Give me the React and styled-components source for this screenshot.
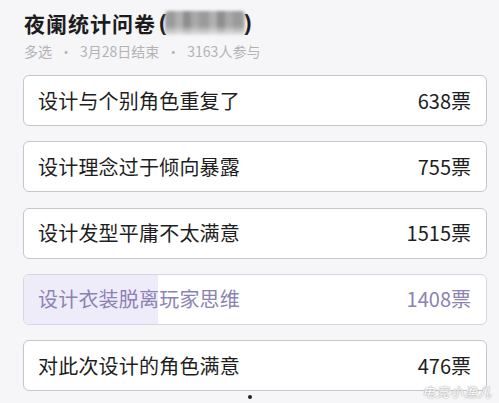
import React from 'react'
import styled, { createGlobalStyle } from 'styled-components'

const Global = createGlobalStyle`
  html, body { margin: 0; padding: 0; background: #f6f6f8; }
  body { font-family: "Noto Sans CJK SC", "Noto Sans", sans-serif; }
`

const options = [
  { id: 1, text: '设计与个别角色重复了', votes: 638 },
  { id: 2, text: '设计理念过于倾向暴露', votes: 755 },
  { id: 3, text: '设计发型平庸不太满意', votes: 1515 },
  { id: 4, text: '设计衣装脱离玩家思维', votes: 1408, mine: true, fill: 29 },
  { id: 5, text: '对此次设计的角色满意', votes: 476 },
]

const App = () => {
  return (
    <Page>
      <Global />
      <Header>
        <Title>
          夜阑统计问卷<Paren>(</Paren><Blur /><Paren>)</Paren>
        </Title>
        <Meta>
          <span>多选</span>
          <Sep>·</Sep>
          <span>3月28日结束</span>
          <Sep>·</Sep>
          <span>3163人参与</span>
        </Meta>
      </Header>
      <List>
        {options.map(o => (
          <Option key={o.id} $mine={o.mine}>
            {o.fill && <Fill style={{ width: `${o.fill}%` }} />}
            <Label>{o.text}</Label>
            <Votes>{o.votes}票</Votes>
          </Option>
        ))}
      </List>
      <Dot />
      <Watermark>电竞小渔儿</Watermark>
    </Page>
  )
}

const Page = styled.div`
  position: relative;
  width: 499px;
  height: 403px;
  overflow: hidden;
  background: #f6f6f8;
  box-sizing: border-box;
  padding: 8px 12px 0 23px;
`

const Header = styled.div`
  display: flex;
  flex-direction: column;
  padding-left: 1px;
`

const Title = styled.div`
  display: flex;
  align-items: center;
  height: 30px;
  font-size: 21px;
  font-weight: 700;
  color: #1c1c1c;
  letter-spacing: 1px;
`

const Paren = styled.span`
  font-family: "Liberation Sans", sans-serif;
  font-weight: 700;
  font-size: 22px;
  margin: 0 2px 0 3px;
`

const Blur = styled.span`
  display: inline-block;
  width: 80px;
  height: 24px;
  margin: 0 -4px 0 -4px;
  border-radius: 4px;
  background:
    linear-gradient(180deg, rgba(255,255,255,0) 60%, rgba(235,235,235,0.9) 100%),
    repeating-linear-gradient(90deg, #9b9b9b 0 10px, #b0b0b0 10px 18px, #8f8f8f 18px 26px, #a8a8a8 26px 34px);
  filter: blur(1.5px);
`

const Meta = styled.div`
  display: flex;
  align-items: center;
  margin-top: 5px;
  font-size: 14px;
  color: #b3b3b6;
  line-height: 16px;
`

const Sep = styled.span`
  margin: 0 7px;
`

const List = styled.div`
  display: flex;
  flex-direction: column;
  gap: 15.3px;
  margin-top: 16px;
`

const Option = styled.div`
  position: relative;
  display: flex;
  align-items: center;
  justify-content: space-between;
  height: 51px;
  box-sizing: border-box;
  padding: 0 15px 0 14px;
  background: #ffffff;
  border: 1px solid ${p => (p.$mine ? '#d7d5e2' : '#c6c6ca')};
  border-radius: 6px;
  overflow: hidden;
  color: ${p => (p.$mine ? '#8c82b4' : '#1e1e1e')};
`

const Fill = styled.div`
  position: absolute;
  left: 0;
  top: 0;
  bottom: 0;
  background: #efecf9;
`

const Label = styled.span`
  position: relative;
  font-size: 20px;
  line-height: 24px;
  letter-spacing: 0.2px;
`

const Votes = styled.span`
  position: relative;
  font-size: 20px;
  line-height: 24px;
`

const Dot = styled.div`
  position: absolute;
  left: 248px;
  top: 395px;
  width: 4px;
  height: 4px;
  border-radius: 50%;
  background: #222;
`

const Watermark = styled.div`
  position: absolute;
  right: 7px;
  bottom: 5px;
  font-size: 13px;
  line-height: 13px;
  font-style: italic;
  color: #fff;
  letter-spacing: 1px;
  text-shadow: 0 0 1px #999, 0 0 2px #aaa;
`

export default App
